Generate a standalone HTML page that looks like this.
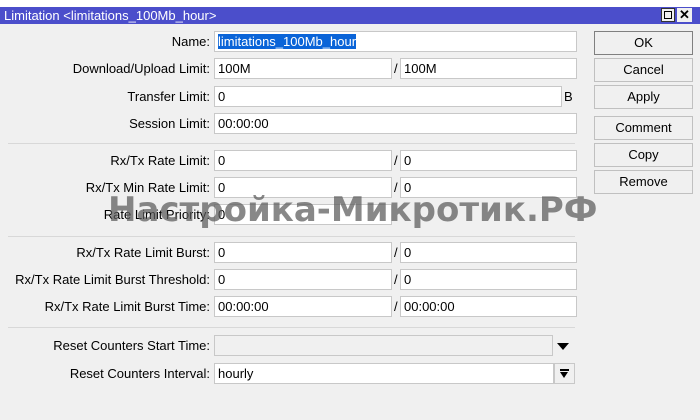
<!DOCTYPE html><html><head><style>
body{margin:0;width:700px;height:420px;background:#f0f0f0;font-family:"Liberation Sans",sans-serif;font-size:13px;position:relative;overflow:hidden;color:#000}
.a{position:absolute}
.tb{left:0;top:7px;width:700px;height:17px;background:#4b4ecb;color:#fff;font-size:13px;line-height:17px}
.l{position:absolute;right:490px;text-align:right;white-space:nowrap;line-height:21px}
.f{position:absolute;height:19px;background:#fff;border:1px solid #c8c8c8;line-height:19px;padding-left:3px;box-sizing:content-box;white-space:nowrap}
.s{position:absolute;left:394px;line-height:21px}
.b{position:absolute;left:594px;width:97px;height:22px;border:1px solid #c0c0c0;background:#f0f0f0;text-align:center;line-height:22px}
.sep{position:absolute;left:8px;width:567px;height:1px;background:#d8d8d8}
</style></head><body>
<div class="a" style="left:0;top:0;width:700px;height:7px;background:#fff"></div>
<div class="a tb"><span style="padding-left:4px">Limitation &lt;limitations_100Mb_hour&gt;</span>
<div class="a" style="left:661px;top:1px;width:14px;height:14px;background:#f0f0f0;border:1px solid #333;box-sizing:border-box"><div style="margin:2px;width:8px;height:8px;border:1px solid #000;box-sizing:border-box"></div></div>
<div class="a" style="left:677px;top:1px;width:15px;height:14px;background:#f0f0f0;color:#000;font-weight:bold;text-align:center;line-height:14px;font-size:13px">✕</div></div>

<div class="l" style="top:31px">Name:</div><div class="f" style="left:214px;top:31px;width:358px"><span style="background:#0a64d8;color:#fff">limitations_100Mb_hour</span></div>
<div class="l" style="top:58px">Download/Upload Limit:</div><div class="f" style="left:214px;top:58px;width:173px">100M</div><div class="s" style="top:58px">/</div><div class="f" style="left:400px;top:58px;width:172px">100M</div>
<div class="l" style="top:86px">Transfer Limit:</div><div class="f" style="left:214px;top:86px;width:343px">0</div><div class="a" style="left:564px;top:86px;line-height:21px">B</div>
<div class="l" style="top:113px">Session Limit:</div><div class="f" style="left:214px;top:113px;width:358px">00:00:00</div>
<div class="sep" style="top:143px"></div>
<div class="l" style="top:150px">Rx/Tx Rate Limit:</div><div class="f" style="left:214px;top:150px;width:173px">0</div><div class="s" style="top:150px">/</div><div class="f" style="left:400px;top:150px;width:172px">0</div>
<div class="l" style="top:177px">Rx/Tx Min Rate Limit:</div><div class="f" style="left:214px;top:177px;width:173px">0</div><div class="s" style="top:177px">/</div><div class="f" style="left:400px;top:177px;width:172px">0</div>
<div class="l" style="top:204px">Rate Limit Priority:</div><div class="f" style="left:214px;top:204px;width:173px">0</div>
<div class="sep" style="top:236px"></div>
<div class="l" style="top:242px">Rx/Tx Rate Limit Burst:</div><div class="f" style="left:214px;top:242px;width:173px">0</div><div class="s" style="top:242px">/</div><div class="f" style="left:400px;top:242px;width:172px">0</div>
<div class="l" style="top:269px">Rx/Tx Rate Limit Burst Threshold:</div><div class="f" style="left:214px;top:269px;width:173px">0</div><div class="s" style="top:269px">/</div><div class="f" style="left:400px;top:269px;width:172px">0</div>
<div class="l" style="top:296px">Rx/Tx Rate Limit Burst Time:</div><div class="f" style="left:214px;top:296px;width:173px">00:00:00</div><div class="s" style="top:296px">/</div><div class="f" style="left:400px;top:296px;width:172px">00:00:00</div>
<div class="sep" style="top:327px"></div>
<div class="l" style="top:335px">Reset Counters Start Time:</div><div class="f" style="left:214px;top:335px;width:334px;background:#f0f0f0"></div>
<div class="a" style="left:557px;top:343px;width:0;height:0;border-left:6px solid transparent;border-right:6px solid transparent;border-top:7px solid #000"></div>
<div class="l" style="top:363px">Reset Counters Interval:</div><div class="f" style="left:214px;top:363px;width:335px">hourly</div>
<div class="a" style="left:554px;top:363px;width:19px;height:19px;border:1px solid #c8c8c8;background:#f0f0f0"><div style="position:absolute;left:5px;top:5px;width:9px;height:2px;background:#000"></div><div style="position:absolute;left:5px;top:8px;border-left:4.5px solid transparent;border-right:4.5px solid transparent;border-top:6px solid #000"></div></div>

<div class="b" style="top:31px;border-color:#808080">OK</div>
<div class="b" style="top:58px">Cancel</div>
<div class="b" style="top:85px">Apply</div>
<div class="b" style="top:116px">Comment</div>
<div class="b" style="top:143px">Copy</div>
<div class="b" style="top:170px">Remove</div>

<div class="a" style="left:108px;top:193px;font-family:'DejaVu Sans',sans-serif;font-size:34px;font-weight:bold;color:rgba(90,90,90,0.72);white-space:nowrap;line-height:34px">Настройка-Микротик.РФ</div>
</body></html>
